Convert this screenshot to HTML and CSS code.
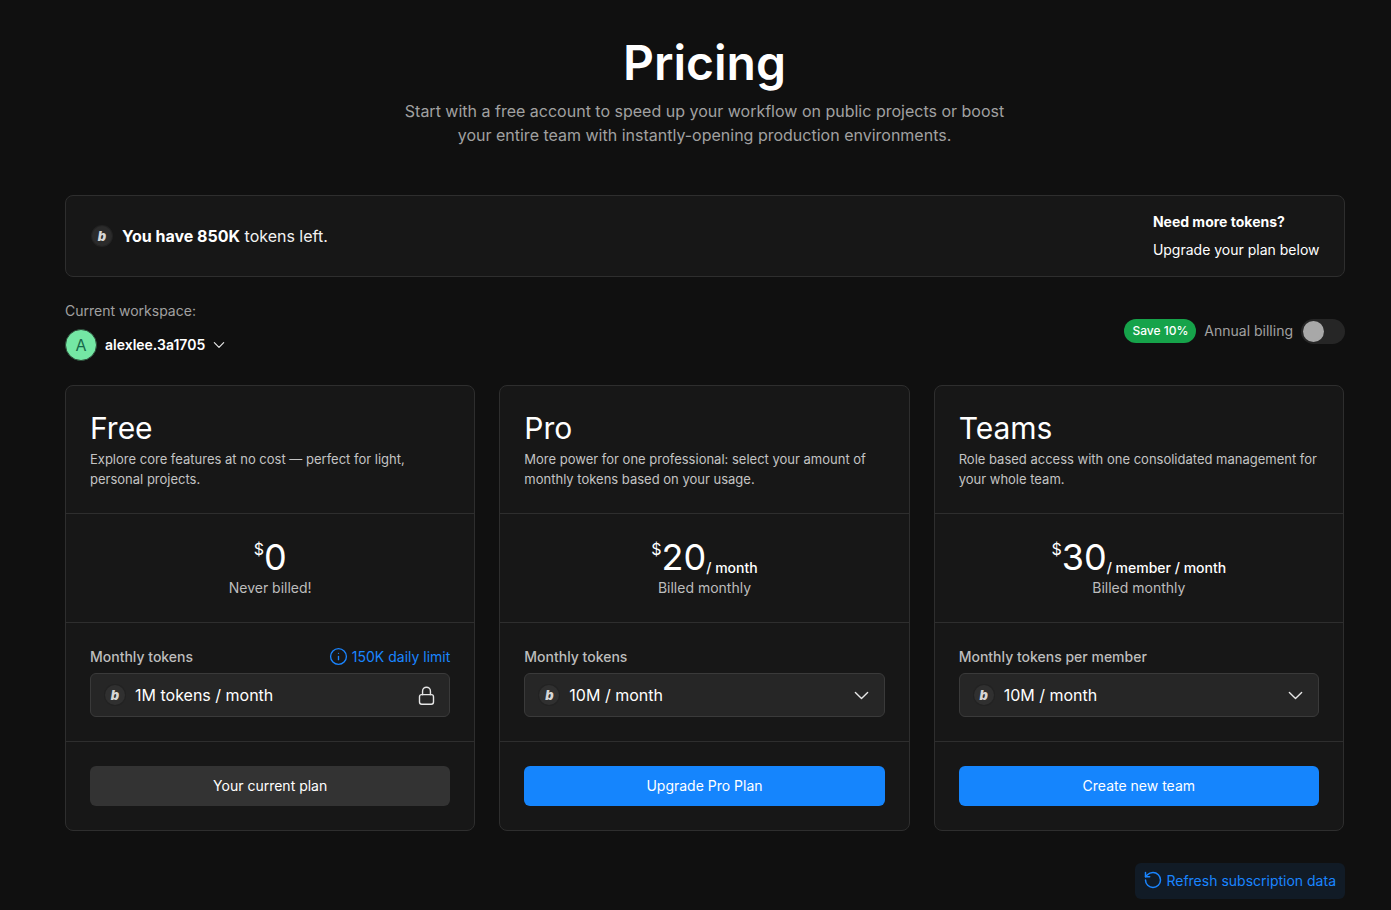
FILE: index.html
```html
<!DOCTYPE html>
<html lang="en">
<head>
  <meta charset="UTF-8">
  <meta name="viewport" content="width=device-width, initial-scale=1.0">
  <title>Pricing</title>
  <link rel="stylesheet" href="styles.css">
</head>
<body>
  <main class="page">
    <header class="intro">
      <h1>Pricing</h1>
      <p>Start with a free account to speed up your workflow on public projects or boost<br>your entire team with instantly-opening production environments.</p>
    </header>

    <section class="balance">
      <div class="balance-left">
        <span class="token-logo"><i>b</i></span>
        <span class="balance-text"><strong>You have 850K</strong> tokens left.</span>
      </div>
      <div class="balance-right">
        <strong>Need more tokens?</strong>
        <span>Upgrade your plan below</span>
      </div>
    </section>

    <section class="controls">
      <div class="workspace">
        <div class="workspace-label">Current workspace:</div>
        <div class="workspace-picker">
          <span class="avatar">A</span>
          <span class="workspace-name">alexlee.3a1705</span>
          <svg class="workspace-chevron" viewBox="0 0 24 24"><path d="m5 8.5 7 7 7-7"/></svg>
        </div>
      </div>
      <div class="billing">
        <span class="save-badge">Save 10%</span>
        <span class="billing-label">Annual billing</span>
        <span class="toggle"><span class="toggle-knob"></span></span>
      </div>
    </section>

    <section class="plans">
      <article class="plan">
        <div class="plan-head">
          <h2>Free</h2>
          <p>Explore core features at no cost — perfect for light, personal projects.</p>
        </div>
        <div class="plan-price">
          <div class="amount"><sup>$</sup><span class="figure">0</span></div>
          <div class="billed">Never billed!</div>
        </div>
        <div class="plan-tokens">
          <div class="tokens-row">
            <span class="tokens-label">Monthly tokens</span>
            <span class="daily-limit">
              <svg viewBox="0 0 24 24"><circle cx="12" cy="12" r="10"/><path d="M12 16v-4"/><path d="M12 8h.01"/></svg>
              150K daily limit
            </span>
          </div>
          <div class="select">
            <span class="token-logo small"><i>b</i></span>
            <span class="select-text">1M tokens / month</span>
            <svg class="select-icon" viewBox="0 0 24 24"><rect x="4" y="11" width="16" height="11" rx="2.5"/><path d="M7.5 11V7a4.5 4.5 0 0 1 9 0v4"/></svg>
          </div>
        </div>
        <div class="plan-action">
          <button class="btn btn-muted">Your current plan</button>
        </div>
      </article>

      <article class="plan">
        <div class="plan-head">
          <h2>Pro</h2>
          <p>More power for one professional: select your amount of monthly tokens based on your usage.</p>
        </div>
        <div class="plan-price">
          <div class="amount"><sup>$</sup><span class="figure">20</span><span class="per">/ month</span></div>
          <div class="billed">Billed monthly</div>
        </div>
        <div class="plan-tokens">
          <div class="tokens-row">
            <span class="tokens-label">Monthly tokens</span>
          </div>
          <div class="select">
            <span class="token-logo small"><i>b</i></span>
            <span class="select-text">10M / month</span>
            <svg class="select-icon" viewBox="0 0 24 24"><path d="m5 8.5 7 7 7-7"/></svg>
          </div>
        </div>
        <div class="plan-action">
          <button class="btn btn-primary">Upgrade Pro Plan</button>
        </div>
      </article>

      <article class="plan">
        <div class="plan-head">
          <h2>Teams</h2>
          <p>Role based access with one consolidated management for your whole team.</p>
        </div>
        <div class="plan-price">
          <div class="amount"><sup>$</sup><span class="figure">30</span><span class="per">/ member / month</span></div>
          <div class="billed">Billed monthly</div>
        </div>
        <div class="plan-tokens">
          <div class="tokens-row">
            <span class="tokens-label">Monthly tokens per member</span>
          </div>
          <div class="select">
            <span class="token-logo small"><i>b</i></span>
            <span class="select-text">10M / month</span>
            <svg class="select-icon" viewBox="0 0 24 24"><path d="m5 8.5 7 7 7-7"/></svg>
          </div>
        </div>
        <div class="plan-action">
          <button class="btn btn-primary">Create new team</button>
        </div>
      </article>
    </section>

    <footer class="refresh-row">
      <button class="refresh">
        <svg viewBox="0 0 24 24"><path d="M3 12a9 9 0 1 0 9-9 9.75 9.75 0 0 0-6.74 2.74L3 8"/><path d="M3 3v5h5"/></svg>
        Refresh subscription data
      </button>
    </footer>
  </main>
</body>
</html>
```

FILE: styles.css
```css
* {
  box-sizing: border-box;
}
html, body {
  margin: 0;
  height: 100%;
  overflow: hidden;
}
body {
  background-color: #101010;
  color: #fff;
  font-family: Inter, "Noto Sans", sans-serif;
}
.page {
  padding: 33px 46px 0 65px;
}

/* Heading */
.intro {
  padding-right: 1px;
  text-align: center;
}
.intro h1 {
  margin: 0;
  font-size: 48px;
  line-height: 60px;
  font-weight: 600;
}
.intro p {
  margin: 6px 0 0;
  font-size: 16px;
  line-height: 24px;
  color: #a1a1a1;
}

/* Token balance */
.balance {
  margin-top: 48px;
  height: 82px;
  padding: 0 24.5px 0 26px;
  display: flex;
  align-items: center;
  justify-content: space-between;
  background-color: #171717;
  border: 1px solid #2e2e2e;
  border-radius: 8px;
}
.balance-left {
  display: flex;
  align-items: center;
  gap: 10px;
}
.balance-text {
  font-size: 16px;
  color: #f2f2f2;
}
.balance-text strong {
  font-weight: 700;
  color: #fff;
}
.balance-right {
  display: flex;
  flex-direction: column;
  gap: 8px;
  font-size: 14px;
  line-height: 20px;
}
.balance-right strong {
  font-weight: 700;
}
.token-logo {
  width: 20px;
  height: 20px;
  flex: none;
  display: flex;
  align-items: center;
  justify-content: center;
  border-radius: 50%;
  background-color: #2b2b2b;
  box-shadow: 0 0 0 1px #222;
  color: #d6d6d6;
}
.token-logo i {
  font-family: Inter, sans-serif;
  font-size: 13px;
  line-height: 1;
  font-weight: 900;
  font-style: italic;
}
.token-logo.small {
  background-color: #303030;
  box-shadow: 0 0 0 1px #222;
}

/* Workspace + billing */
.controls {
  margin-top: 24px;
  display: flex;
  align-items: center;
  justify-content: space-between;
}
.workspace-label {
  font-size: 14px;
  line-height: 20px;
  color: #a1a1a1;
}
.workspace-picker {
  margin-top: 8px;
  display: flex;
  align-items: center;
  height: 32px;
}
.avatar {
  width: 32px;
  height: 32px;
  display: flex;
  align-items: center;
  justify-content: center;
  border-radius: 50%;
  background-color: #74e7a4;
  border: 1px solid #2c4a38;
  color: #17694a;
  font-size: 16px;
}
.workspace-name {
  margin-left: 8px;
  padding-bottom: 1px;
  font-size: 14px;
  font-weight: 600;
}
.workspace-chevron {
  margin-left: 6px;
  width: 16px;
  height: 16px;
  fill: none;
  stroke: #e6e6e6;
  stroke-width: 1.8;
  stroke-linecap: round;
  stroke-linejoin: round;
}
.billing {
  display: flex;
  align-items: center;
  gap: 8px;
}
.save-badge {
  height: 24px;
  padding: 0 8px 1px;
  display: flex;
  align-items: center;
  border-radius: 12px;
  background-color: #16a34a;
  font-size: 12px;
  font-weight: 500;
}
.billing-label {
  padding-bottom: 1px;
  font-size: 14px;
  color: #a1a1a1;
}
.toggle {
  width: 44px;
  height: 25px;
  padding: 2px;
  display: block;
  border-radius: 13px;
  background-color: #262626;
}
.toggle-knob {
  display: block;
  width: 21px;
  height: 21px;
  border-radius: 50%;
  background-color: #a8a8a8;
}

/* Plan cards */
.plans {
  margin-top: 24px;
  padding-right: 1px;
  display: grid;
  grid-template-columns: repeat(3, 1fr);
  gap: 24px;
}
.plan {
  background-color: #171717;
  border: 1px solid #2e2e2e;
  border-radius: 8px;
}
.plan-head {
  height: 128px;
  padding: 24px 24px 0;
  border-bottom: 1px solid #2e2e2e;
}
.plan-head h2 {
  margin: 0;
  font-size: 30px;
  line-height: 36px;
  font-weight: 400;
}
.plan-head p {
  margin: 3px 0 0;
  font-size: 13px;
  line-height: 20px;
  color: #c4c4c4;
}
.plan-price {
  height: 109px;
  padding-top: 23px;
  text-align: center;
  border-bottom: 1px solid #2e2e2e;
}
.amount {
  height: 40px;
  line-height: 40px;
}
.amount sup {
  font-size: 16px;
  line-height: 0;
  vertical-align: 14px;
}
.figure {
  font-size: 36px;
  vertical-align: -1px;
}
.per {
  font-size: 14px;
  font-weight: 500;
  vertical-align: -4px;
}
.billed {
  margin-top: 1px;
  font-size: 14px;
  line-height: 20px;
  color: #bdbdbd;
}
.plan-tokens {
  height: 119px;
  padding: 23px 24px 0;
  border-bottom: 1px solid #2e2e2e;
}
.tokens-row {
  height: 20px;
  display: flex;
  align-items: center;
  justify-content: space-between;
}
.tokens-label {
  font-size: 14px;
  font-weight: 500;
  color: #bdbdbd;
}
.daily-limit {
  display: flex;
  align-items: center;
  gap: 4px;
  font-size: 14px;
  color: #1a85ff;
}
.daily-limit svg {
  width: 19px;
  height: 19px;
  fill: none;
  stroke: currentColor;
  stroke-width: 1.7;
  stroke-linecap: round;
  stroke-linejoin: round;
}
.select {
  margin-top: 7px;
  height: 44px;
  padding: 0 12px 0 14px;
  display: flex;
  align-items: center;
  gap: 10px;
  background-color: #262626;
  border: 1px solid #3a3a3a;
  border-radius: 6px;
}
.select-text {
  flex: 1;
  font-size: 16px;
}
.select-icon {
  width: 21px;
  height: 21px;
  fill: none;
  stroke: #e6e6e6;
  stroke-width: 1.6;
  stroke-linecap: round;
  stroke-linejoin: round;
}
.plan-action {
  padding: 24px;
}
.btn {
  display: block;
  width: 100%;
  height: 40px;
  padding: 0 0 2px;
  border: none;
  border-radius: 6px;
  color: #fff;
  font-family: inherit;
  font-size: 14px;
  font-weight: 400;
  cursor: pointer;
}
.btn-primary {
  background-color: #1585fd;
}
.btn-muted {
  background-color: #333;
}

/* Refresh */
.refresh-row {
  margin-top: 32px;
  display: flex;
  justify-content: flex-end;
}
.refresh {
  height: 36px;
  padding: 0 9px 2px 8px;
  display: flex;
  align-items: center;
  gap: 3px;
  background-color: #111b26;
  border: none;
  border-radius: 6px;
  color: #1a85ff;
  font-family: inherit;
  font-size: 14px;
  cursor: pointer;
}
.refresh svg {
  width: 20px;
  height: 20px;
  fill: none;
  stroke: currentColor;
  stroke-width: 1.8;
  stroke-linecap: round;
  stroke-linejoin: round;
}
```
